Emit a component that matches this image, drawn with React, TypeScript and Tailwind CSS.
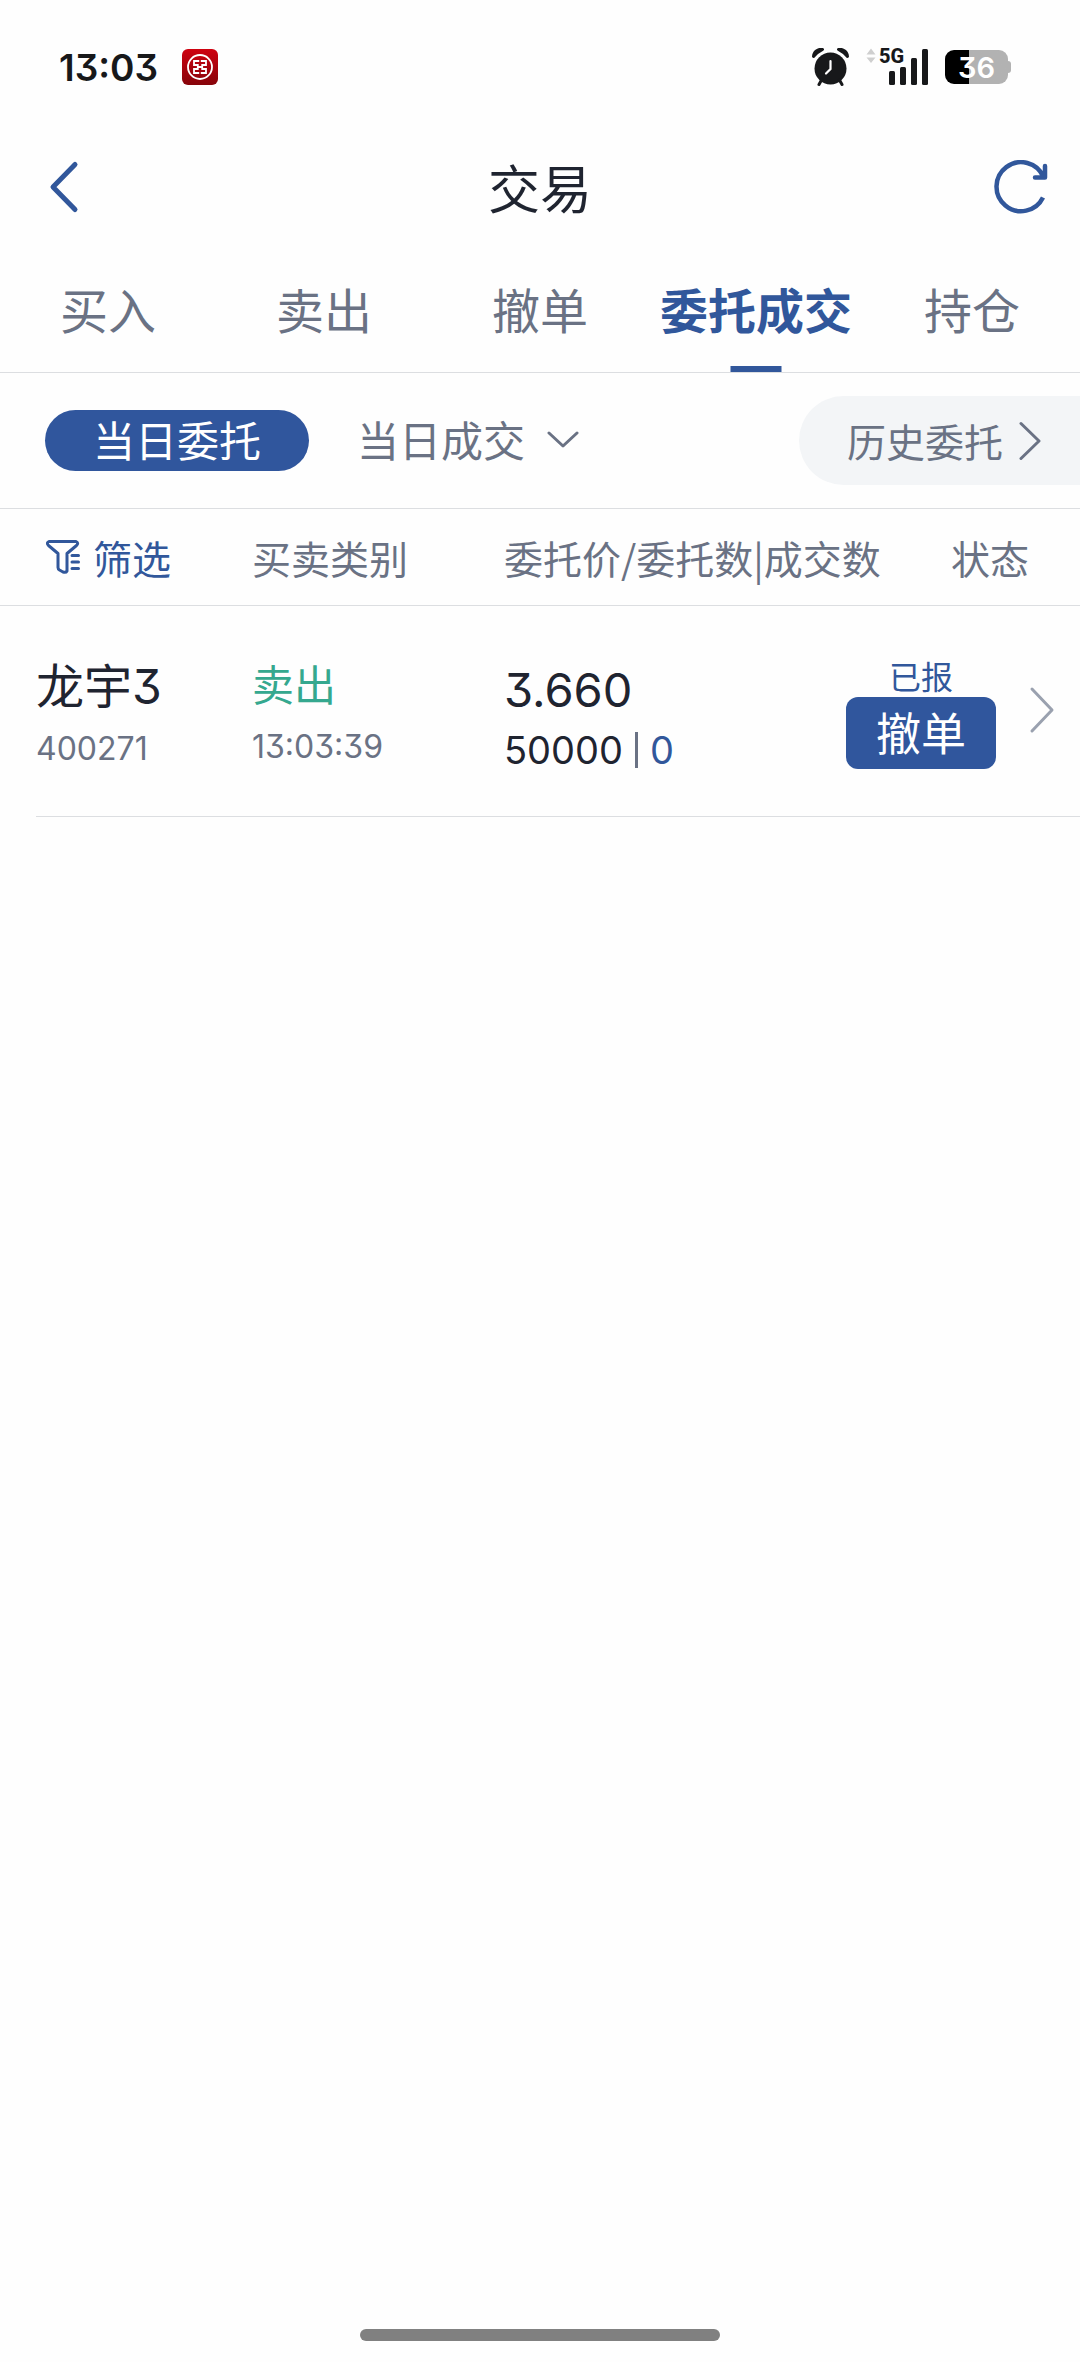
import React from "react";

const tabs = ["买入", "卖出", "撤单", "委托成交", "持仓"];

const digits = "font-['Inter','Noto_Sans_CJK_SC',sans-serif] [font-feature-settings:'cv09']";

function BankIcon() {
  return (
    <svg className="size-9" viewBox="0 0 36 36" aria-hidden="true">
      <defs>
        <linearGradient id="bankRed" x1="0" y1="0" x2="0" y2="1">
          <stop offset="0" stopColor="#cf0210" />
          <stop offset="1" stopColor="#86040a" />
        </linearGradient>
      </defs>
      <rect width="36" height="36" rx="6" fill="url(#bankRed)" />
      <circle cx="18" cy="18" r="12" fill="none" stroke="#fff" strokeWidth="1.800" />
      <path
        d="M17.200 12H12V16H15.800V20H12V24H17.200M18.800 12H24V16H20.200V20H24V24H18.800M15.800 18H20.200"
        fill="none"
        stroke="#fff"
        strokeWidth="1.800"
      />
    </svg>
  );
}

function AlarmIcon() {
  return (
    <svg className="h-[38px] w-[37px]" viewBox="0 0 37 38" aria-hidden="true">
      <circle cx="18.500" cy="20.500" r="16" fill="#17181a" />
      <path d="M1.500 8.500A7.500 7.500 0 0 1 10.500 1.500Q5.500 4 1.500 8.500ZM35.500 8.500A7.500 7.500 0 0 0 26.500 1.500Q31.500 4 35.500 8.500Z" fill="#17181a" stroke="#17181a" strokeWidth="3" strokeLinejoin="round" />
      <path d="M9.500 32l-2.500 4.500M27.500 32l2.500 4.500" stroke="#17181a" strokeWidth="3" strokeLinecap="round" />
      <path d="M18.500 13v8l-4.500 4.500" fill="none" stroke="#fff" strokeWidth="2.200" strokeLinecap="round" />
    </svg>
  );
}

function SignalIcon() {
  return (
    <div className="relative">
      <svg className="h-[38px] w-[62px]" viewBox="0 0 62 38" aria-hidden="true">
        <path d="M.5 6.500L5 .5L9.500 6.500ZM.5 9.500L5 15L9.500 9.500Z" fill="#cfcfcf" />
        <g fill="#17181a">
          <rect x="23" y="23" width="6" height="14" rx="1.500" />
          <rect x="34" y="19" width="6" height="18" rx="1.500" />
          <rect x="45" y="10" width="6" height="27" rx="1.500" />
          <rect x="56" y="1" width="6" height="36" rx="1.500" />
        </g>
      </svg>
      <span className="absolute -top-1 left-[13px] font-['Roboto',sans-serif] text-[20px] leading-6 font-extrabold text-[#17181a]">5G</span>
    </div>
  );
}

function Battery() {
  return (
    <div className="flex items-center">
      <div className="flex h-[34px] w-[63px] items-center justify-center rounded-[9px] bg-linear-to-r from-black from-38% to-[#b2b2b2] to-38%">
        <span className={`${digits} text-[29px] leading-none font-semibold text-white`}>36</span>
      </div>
      <div className="h-3 w-[3px] rounded-r-full bg-[#b2b2b2]" />
    </div>
  );
}

function Chevron({ className, d, box, width }: { className: string; d: string; box: string; width: number }) {
  return (
    <svg className={className} viewBox={box} fill="none" stroke="currentColor" strokeWidth={width} strokeLinecap="round" strokeLinejoin="round" aria-hidden="true">
      <path d={d} />
    </svg>
  );
}

function StatusBar() {
  return (
    <div className="flex h-[134px] items-center pr-[69px] pl-[59px]">
      <span className={`${digits} text-[37px] leading-none font-semibold text-[#17181a]`}>13:03</span>
      <div className="ml-6">
        <BankIcon />
      </div>
      <div className="ml-auto flex items-center">
        <AlarmIcon />
        <div className="mr-[17px] ml-[17px]">
          <SignalIcon />
        </div>
        <Battery />
      </div>
    </div>
  );
}

function Header() {
  return (
    <header className="grid h-[106px] grid-cols-[1fr_auto_1fr] items-center px-8">
      <button type="button" aria-label="返回" className="justify-self-start pl-4 text-[#31579b]">
        <Chevron className="h-[54px] w-[31px]" box="0 0 31 54" d="M27 4.500L5 27L27 49.500" width={5} />
      </button>
      <h1 className="text-[52px] leading-none text-[#1f2430]">交易</h1>
      <button type="button" aria-label="刷新" className="justify-self-end text-[#31579b]">
        <svg className="h-[54px] w-[54px]" viewBox="0 0 54 54" fill="none" stroke="currentColor" strokeWidth="4.500" aria-hidden="true">
          <path d="M49 37.500A24.500 24.500 0 1 1 49.500 17" />
          <path d="M51 6V17.500H41" strokeLinecap="round" strokeLinejoin="round" />
        </svg>
      </button>
    </header>
  );
}

function Tabs() {
  return (
    <nav role="tablist" className="grid h-[133px] grid-cols-5 border-b border-[#dcdee1]">
      {tabs.map((t) => {
        const on = t === "委托成交";
        return (
          <button
            key={t}
            type="button"
            role="tab"
            aria-selected={on}
            className={`relative flex items-center justify-center pt-1 text-[48px] leading-none whitespace-nowrap ${on ? "font-bold text-[#31579b]" : "text-[#6a7284]"}`}
          >
            {t}
            {on && <span className="absolute bottom-0 left-1/2 h-1.5 w-[51px] -translate-x-1/2 bg-[#31579b]" />}
          </button>
        );
      })}
    </nav>
  );
}

function SubBar() {
  return (
    <div className="flex h-[136px] items-center border-b border-[#dcdee1] pl-[45px]">
      <button type="button" className="h-[61px] w-[264px] rounded-full bg-[#30569d] pb-1 text-[42px] leading-none text-white">
        当日委托
      </button>
      <button type="button" className="ml-12 flex items-center gap-[22px] pb-1 text-[42px] leading-none text-[#6a7284]">
        当日成交
        <Chevron className="h-5 w-8" box="0 0 32 20" d="M2 4L16 17L30 4" width={3} />
      </button>
      <button type="button" className="ml-auto flex h-[89px] items-center gap-4 rounded-l-full bg-[#f3f5f7] pr-[37px] pl-12 text-[39px] leading-none text-[#6a7284]">
        历史委托
        <Chevron className="h-[40px] w-6" box="0 0 24 40" d="M2 2.500L20 20L2 37.500" width={3} />
      </button>
    </div>
  );
}

function FilterIcon() {
  return (
    <svg className="size-[34px]" viewBox="0 0 34 34" fill="none" stroke="currentColor" strokeWidth="3" strokeLinejoin="round" strokeLinecap="round" aria-hidden="true">
      <path d="M3 1.500H30Q33 3 30.500 5.500L21 13.500V31Q20 33 17 32L13.500 30Q12 29 12 27.500V13.500L2.500 5.500Q0 3 3 1.500Z" />
      <path d="M26 15.500h6.500M26 22h6.500M26 28.500h6.500" />
    </svg>
  );
}

function Orders() {
  return (
    <table className="block">
      <thead className="block">
        <tr className="flex h-[97px] items-center border-b border-[#dcdee1] text-[39px] leading-none text-[#6a7284]">
          <th scope="col" className="w-[252px] shrink-0 pl-[46px] font-normal">
            <button type="button" className="flex items-center gap-[13px] text-[#31579b]">
              <FilterIcon />
              筛选
            </button>
          </th>
          <th scope="col" className="w-[252px] shrink-0 text-left font-normal">买卖类别</th>
          <th scope="col" className="flex-1 text-left font-normal whitespace-nowrap">委托价/委托数|成交数</th>
          <th scope="col" className="pr-[51px] text-right font-normal">状态</th>
        </tr>
      </thead>
      <tbody className="block">
        <tr className="ml-9 flex h-[211px] border-b border-[#dcdee1]">
          <td className="w-[216px] shrink-0 pt-12">
            <div className={`${digits} text-[48px] leading-[66px] text-[#1f2430]`}>龙宇3</div>
            <div className={`${digits} text-[32px] leading-[58px] text-[#6a7284]`}>400271</div>
          </td>
          <td className="w-[252px] shrink-0 pt-11">
            <div className="text-[42px] leading-[66px] text-[#35a88f]">卖出</div>
            <div className={`${digits} text-[32px] leading-[62px] text-[#6a7284]`}>13:03:39</div>
          </td>
          <td className={`${digits} flex-1 pt-12 text-[#1f2430]`}>
            <div className="text-[47px] leading-[72px]">3.660</div>
            <div className="flex items-center gap-3 text-[38px] leading-[48px]">
              50000
              <span className="h-9 w-[3px] bg-[#6a7284]" />
              <span className="text-[#31579b]">0</span>
            </div>
          </td>
          <td className="flex flex-col items-center pt-12">
            <span className="text-[32px] leading-[43px] text-[#31579b]">已报</span>
            <button type="button" className="h-[72px] w-[150px] rounded-xl bg-[#30569d] pb-1 text-[45px] leading-none text-white">
              撤单
            </button>
          </td>
          <td className="flex pt-20 pr-[25px] pl-[33px]">
            <button type="button" aria-label="委托详情" className="self-start text-[#9aa1af]">
              <Chevron className="h-[48px] w-[26px]" box="0 0 26 48" d="M3 3L23 24L3 45" width={3} />
            </button>
          </td>
        </tr>
      </tbody>
    </table>
  );
}

export default function App() {
  return (
    <div className="flex min-h-screen flex-col bg-[#fefefe] font-['Noto_Sans_CJK_SC',sans-serif]">
      <StatusBar />
      <Header />
      <Tabs />
      <SubBar />
      <main className="flex-1">
        <Orders />
      </main>
      <div className="mb-[21px] h-3 w-1/3 self-center rounded-full bg-[#808080]" />
    </div>
  );
}
